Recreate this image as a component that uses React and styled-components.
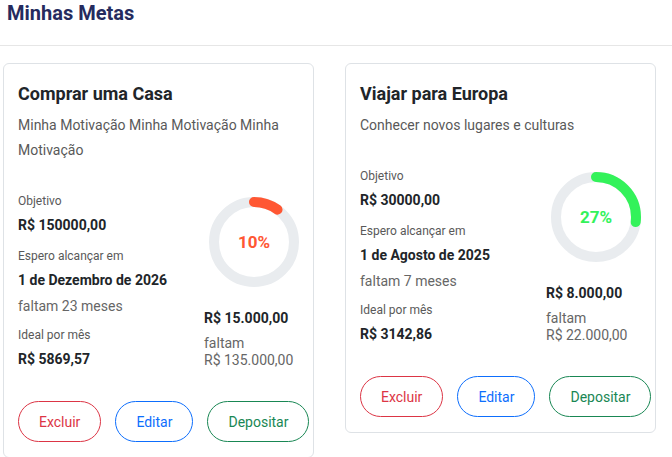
import React from 'react';
import styled, { createGlobalStyle } from 'styled-components';

const GlobalStyle = createGlobalStyle`
  * { box-sizing: border-box; }
  body {
    margin: 0;
    background: #fff;
    font-family: Roboto, "Liberation Sans", Arial, sans-serif;
    color: #212529;
  }
`;

const Header = styled.header`
  padding: 1px 7px 20px;
  border-bottom: 1px solid #e6e6e6;
`;

const PageTitle = styled.h1`
  margin: 0;
  font-size: 20px;
  line-height: 24px;
  font-weight: 700;
  color: #252b5e;
`;

const CardList = styled.div`
  display: flex;
  align-items: flex-start;
  gap: 31px;
  padding: 17px 0 0 3px;
`;

const Card = styled.div`
  width: 311px;
  background: #fff;
  border: 1px solid #dee2e6;
  border-radius: 6px;
  padding: 16px 15px 15px 14px;
`;

const CardTitle = styled.h2`
  margin: 0;
  font-size: 18px;
  line-height: 28px;
  font-weight: 700;
  color: #212529;
`;

const Description = styled.p`
  margin: 5px 0 29px;
  font-size: 14px;
  line-height: 25px;
  color: #595959;
`;

const Row = styled.div`
  display: flex;
  align-items: flex-end;
  justify-content: space-between;
  margin-right: -6px;
`;

const InfoColumn = styled.div`
  display: flex;
  flex-direction: column;
`;

const Label = styled.span`
  font-size: 12px;
  line-height: 18px;
  color: #595959;
  margin-bottom: 5px;
`;

const Value = styled.span`
  font-size: 14px;
  line-height: 20px;
  font-weight: 700;
  color: #212529;
  margin-bottom: ${p => p.$gap ?? 12}px;
`;

const Remaining = styled.span`
  font-size: 14px;
  line-height: 20px;
  color: #666;
  margin-bottom: 10px;
`;

const ProgressColumn = styled.div`
  width: 100px;
  display: flex;
  flex-direction: column;
`;

const Ring = styled.div`
  position: relative;
  width: 90px;
  height: 90px;
  align-self: center;
  margin-bottom: 21px;
`;

const RingLabel = styled.span`
  position: absolute;
  inset: 0;
  display: flex;
  align-items: center;
  justify-content: center;
  font-size: 17px;
  font-weight: 700;
  color: ${p => p.$color};
`;

const Saved = styled.span`
  font-size: 14px;
  line-height: 20px;
  font-weight: 700;
  color: #212529;
  margin-bottom: 7px;
`;

const Missing = styled.span`
  font-size: 14px;
  line-height: 17px;
  color: #666;
`;

const Actions = styled.div`
  display: flex;
  gap: 14px;
  margin-top: 32px;
  white-space: nowrap;
`;

const PillButton = styled.button`
  flex: none;
  height: 41px;
  padding: 0 20px;
  border: 1px solid ${p => p.$color};
  border-radius: 999px;
  background: #fff;
  color: ${p => p.$color};
  font-family: inherit;
  font-size: 14px;
  cursor: pointer;
`;

const goals = [
  {
    title: 'Comprar uma Casa',
    description: 'Minha Motivação Minha Motivação Minha Motivação',
    target: 'R$ 150000,00',
    date: '1 de Dezembro de 2026',
    months: 'faltam 23 meses',
    monthly: 'R$ 5869,57',
    percent: 10,
    color: '#ff5733',
    saved: 'R$ 15.000,00',
    missing: 'R$ 135.000,00',
  },
  {
    title: 'Viajar para Europa',
    description: 'Conhecer novos lugares e culturas',
    target: 'R$ 30000,00',
    date: '1 de Agosto de 2025',
    months: 'faltam 7 meses',
    monthly: 'R$ 3142,86',
    percent: 27,
    color: '#33f25a',
    saved: 'R$ 8.000,00',
    missing: 'R$ 22.000,00',
  },
];

const ProgressRing = ({ percent, color }) => {
  const r = 40;
  const c = 2 * Math.PI * r;
  return (
    <Ring>
      <svg width="90" height="90" viewBox="0 0 90 90">
        <circle cx="45" cy="45" r={r} fill="none" stroke="#e9ecef" strokeWidth="10" />
        <circle
          cx="45"
          cy="45"
          r={r}
          fill="none"
          stroke={color}
          strokeWidth="10"
          strokeLinecap="round"
          strokeDasharray={`${(percent / 100) * c} ${c}`}
          transform="rotate(-90 45 45)"
        />
      </svg>
      <RingLabel $color={color}>{percent}%</RingLabel>
    </Ring>
  );
};

const GoalCard = ({ goal }) => (
  <Card>
    <CardTitle>{goal.title}</CardTitle>
    <Description>{goal.description}</Description>
    <Row>
      <InfoColumn>
        <Label>Objetivo</Label>
        <Value>{goal.target}</Value>
        <Label>Espero alcançar em</Label>
        <Value $gap={6}>{goal.date}</Value>
        <Remaining>{goal.months}</Remaining>
        <Label>Ideal por mês</Label>
        <Value $gap={0}>{goal.monthly}</Value>
      </InfoColumn>
      <ProgressColumn>
        <ProgressRing percent={goal.percent} color={goal.color} />
        <Saved>{goal.saved}</Saved>
        <Missing>faltam</Missing>
        <Missing>{goal.missing}</Missing>
      </ProgressColumn>
    </Row>
    <Actions>
      <PillButton $color="#dc3545">Excluir</PillButton>
      <PillButton $color="#0d6efd">Editar</PillButton>
      <PillButton $color="#198754">Depositar</PillButton>
    </Actions>
  </Card>
);

export default function App() {
  return (
    <>
      <GlobalStyle />
      <Header>
        <PageTitle>Minhas Metas</PageTitle>
      </Header>
      <CardList>
        {goals.map(goal => (
          <GoalCard key={goal.title} goal={goal} />
        ))}
      </CardList>
    </>
  );
}
